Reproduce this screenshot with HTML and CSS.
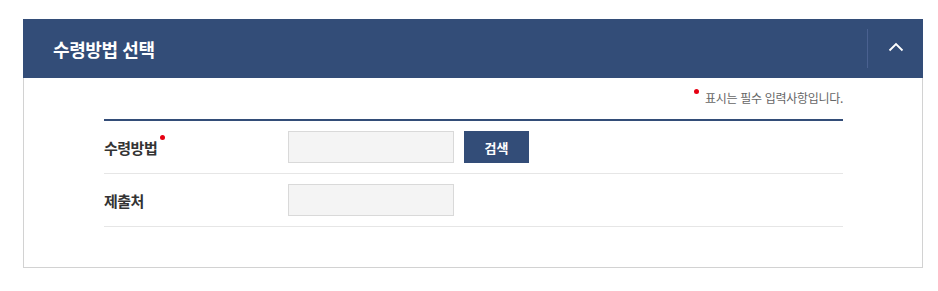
FILE: index.html
```html
<!DOCTYPE html>
<html lang="ko">
<head>
    <meta charset="UTF-8">
    <title>수령방법 선택</title>
    <link rel="stylesheet" href="styles.css">
</head>
<body>

<div class="panel">
    <div class="panel-head">
        <h2>수령방법 선택</h2>
        <button class="toggle-btn" type="button">
            <svg width="16" height="10" viewBox="0 0 16 10"><path d="M1.5 8.5 L8 2 L14.5 8.5" fill="none" stroke="#fff" stroke-width="1.8"/></svg>
        </button>
    </div>
    <div class="panel-body">
        <p class="req-note"><span class="dot"></span>표시는 필수 입력사항입니다.</p>
        <div class="form-table">
            <div class="form-row">
                <div class="form-label required">수령방법</div>
                <div class="form-field">
                    <input type="text" class="text-input">
                    <button class="search-btn" type="button">검색</button>
                </div>
            </div>
            <div class="form-row">
                <div class="form-label">제출처</div>
                <div class="form-field">
                    <input type="text" class="text-input">
                </div>
            </div>
        </div>
    </div>
</div>

</body>
</html>
```

FILE: styles.css
```css
body {
    margin: 0;
    padding: 19px 15px 0 23px;
    font-family: "Noto Sans CJK KR", "Noto Sans", sans-serif;
    background-color: #fff;
    color: #333;
}
.panel {
    width: 900px;
    border: 1px solid #d2d2d2;
    border-top: none;
    box-sizing: border-box;
}
.panel-head {
    display: flex;
    align-items: center;
    height: 59px;
    margin: 0 -1px;
    background-color: #334d78;
}
.panel-head h2 {
    flex: 1;
    margin: 0;
    padding-left: 30px;
    font-size: 18px;
    font-weight: 700;
    color: #fff;
    letter-spacing: -0.4px;
}
.toggle-btn {
    width: 56px;
    height: 39px;
    border: none;
    border-left: 1px solid #4a6190;
    background: none;
    display: flex;
    align-items: center;
    justify-content: center;
    padding: 0 0 3px 0;
}
.panel-body {
    padding: 10px 79px 40px 80px;
}
.req-note {
    margin: 0 0 11px;
    text-align: right;
    font-size: 12px;
    color: #666;
    letter-spacing: -0.3px;
    line-height: 20px;
}
.dot {
    display: inline-block;
    width: 5px;
    height: 5px;
    border-radius: 50%;
    background-color: #e60012;
    vertical-align: top;
    margin: 1px 6px 0 0;
}
.form-table {
    border-top: 2px solid #334d78;
}
.form-row {
    display: flex;
    align-items: center;
    height: 52px;
    border-bottom: 1px solid #e6e6e6;
}
.form-label {
    width: 184px;
    font-size: 15px;
    font-weight: 700;
    color: #333;
    letter-spacing: -0.5px;
    position: relative;
}
.form-label.required::after {
    content: "";
    position: absolute;
    left: 56px;
    top: -2px;
    width: 5px;
    height: 5px;
    border-radius: 50%;
    background-color: #e60012;
}
.form-field {
    display: flex;
    align-items: center;
    gap: 10px;
}
.text-input {
    width: 166px;
    height: 32px;
    box-sizing: border-box;
    border: 1px solid #d9d9d9;
    background-color: #f4f4f4;
    margin: 0;
}
.search-btn {
    width: 65px;
    height: 32px;
    border: none;
    background-color: #334d78;
    color: #fff;
    font-family: inherit;
    font-size: 13px;
    font-weight: 700;
}
```
